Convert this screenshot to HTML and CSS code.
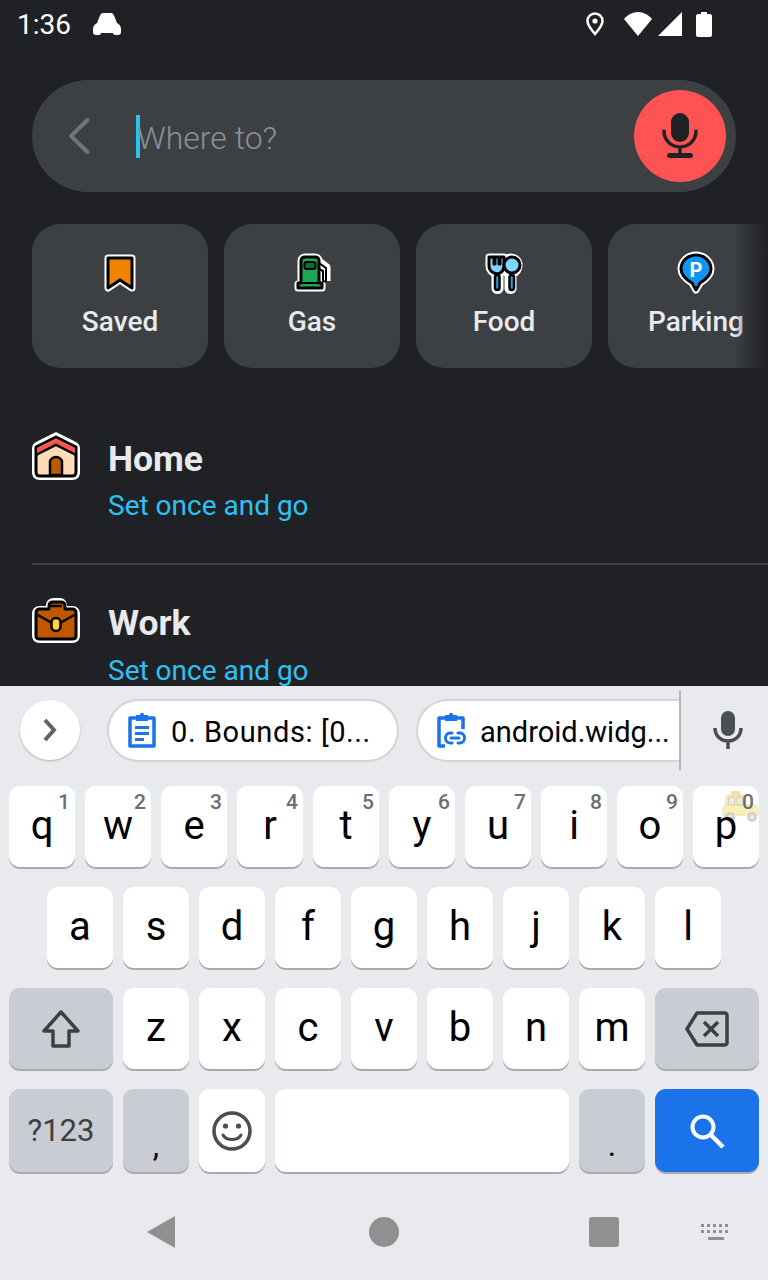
FILE: index.html
```html
<!DOCTYPE html>
<html lang="en">
<head>
    <meta charset="UTF-8">
    <meta name="viewport" content="width=device-width, initial-scale=1.0">
    <title>Where to?</title>
    <link rel="stylesheet" href="styles.css">
</head>
<body>
    <div class="app">
        <!-- status bar -->
        <div class="status">
            <span class="time">1:36</span>
            <svg class="notif" width="28" height="22" viewBox="0 0 28 22"><path fill="#fff" d="M10 0h8c2 0 3 2 4 5l2 5c2 1 4 3 4 6v3c0 2-1 3-3 3h-3c-1 0-2-1-2-2H8c0 1-1 2-2 2H3c-2 0-3-1-3-3v-3c0-3 2-5 4-6l2-5c1-3 2-5 4-5z"/></svg>
            <span class="spacer"></span>
            <svg class="pin" width="18" height="24" viewBox="0 0 18 24"><path fill="none" stroke="#fff" stroke-width="2.500" d="M9 1.500c-4.200 0-7.500 3.300-7.500 7.500 0 4.500 4.500 9.500 7.500 13 3-3.500 7.500-8.500 7.500-13 0-4.200-3.300-7.500-7.500-7.500z"/><circle cx="9" cy="9" r="2.600" fill="#fff"/></svg>
            <svg class="wifi" width="28" height="24" viewBox="0 0 28 24"><path fill="#fff" d="M14 24L0 7c3.500-4 8.500-7 14-7s10.500 3 14 7z"/></svg>
            <svg class="cell" width="24" height="24" viewBox="0 0 24 24"><path fill="#fff" d="M24 0v24H0z"/></svg>
            <svg class="batt" width="16" height="25" viewBox="0 0 16 25"><path fill="#fff" d="M5 0h6v2h3c1 0 2 1 2 2v19c0 1-1 2-2 2H2c-1 0-2-1-2-2V4c0-1 1-2 2-2h3z"/></svg>
        </div>

        <!-- search bar -->
        <div class="search">
            <svg class="back" width="22" height="36" viewBox="0 0 22 36"><path fill="none" stroke="#6f7478" stroke-width="4" stroke-linecap="round" stroke-linejoin="round" d="M19.500 2L3 18l16.500 16"/></svg>
            <span class="caret"></span>
            <span class="placeholder">Where to?</span>
            <div class="mic-btn">
                <svg width="36" height="46" viewBox="0 0 36 46"><rect x="9" y="0" width="18" height="29" rx="9" fill="#202125"/><path fill="none" stroke="#202125" stroke-width="3.500" stroke-linecap="round" d="M2 18c0 9 7 16 16 16s16-7 16-16M18 34v8"/><rect x="5" y="40" width="26" height="5" rx="2.500" fill="#202125"/></svg>
            </div>
        </div>

        <!-- category chips -->
        <div class="chips">
            <div class="chip">
                <svg class="chip-icon" width="40" height="44" viewBox="0 0 40 44">
                    <path class="halo" d="M8 8h24v30l-12-8-12 8z"/>
                    <path class="ink" fill="#f08300" d="M8 8h24v30l-12-8-12 8z"/>
                </svg>
                <span>Saved</span>
            </div>
            <div class="chip">
                <svg class="chip-icon" width="40" height="44" viewBox="0 0 40 44">
                    <path class="halo" d="M26 10l9 7v14M9 34V11c0-3 2-4 4-4h10c2 0 4 1 4 4v23h3v4H6v-4z"/>
                    <path fill="#fff" stroke="#000" stroke-width="2" stroke-linejoin="round" d="M27 13l7 5v12c0 2-3 2-3 0v-9l-4-2z"/>
                    <path class="ink" fill="#1fa655" d="M9 33V11c0-3 2-4 4-4h10c2 0 4 1 4 4v22h3v5H6v-5z"/>
                    <rect x="12.500" y="12" width="11" height="7" rx="2" fill="#0d6b35" stroke="#000" stroke-width="2"/>
                    <path stroke="#000" stroke-width="2" d="M7 33h23"/>
                </svg>
                <span>Gas</span>
            </div>
            <div class="chip">
                <svg class="chip-icon" width="40" height="44" viewBox="0 0 40 44">
                    <path class="halo" d="M5 7v9c0 4 3 7 6 8v15c0 2 5 2 5 0V24c1-1 3-2 4-3 1 1 2 2 4 3v15c0 2 5 2 5 0V24c4-1 6-5 6-9 0-5-4-8-8-8s-6 2-7 4V7z"/>
                    <path class="ink" fill="#7fd6ff" d="M5 7v9c0 4 3 7 8 8 5-1 7-4 7-8V7h-4v7h-1V7h-4v7h-1V7z"/>
                    <circle cx="28" cy="15" r="8" fill="#7fd6ff" stroke="#000" stroke-width="3"/>
                    <rect x="11" y="25" width="4.500" height="15" rx="2.200" fill="#29a3e8" stroke="#000" stroke-width="2.500"/>
                    <rect x="25.500" y="25" width="4.500" height="15" rx="2.200" fill="#29a3e8" stroke="#000" stroke-width="2.500"/>
                </svg>
                <span>Food</span>
            </div>
            <div class="chip">
                <svg class="chip-icon" width="40" height="44" viewBox="0 0 40 44">
                    <path class="halo" d="M20 5C11 5 5 12 5 19c0 7 6 11 11 14l4 7 4-7c5-3 11-7 11-14 0-7-6-14-15-14z"/>
                    <path class="ink" fill="#1195f3" d="M20 5C11 5 5 12 5 19c0 7 6 11 11 14l4 7 4-7c5-3 11-7 11-14 0-7-6-14-15-14z"/>
                    <text class="pin-letter" x="20" y="27" text-anchor="middle">P</text>
                </svg>
                <span>Parking</span>
            </div>
            <div class="chips-fade"></div>
        </div>

        <!-- saved places -->
        <div class="places">
            <div class="place place-first">
                <svg class="place-icon" width="48" height="48" viewBox="0 0 48 48">
                    <path fill="#fff" d="M24 0L44 10c2 1 4 3 4 6v24c0 5-3 8-8 8H8c-5 0-8-3-8-8V16c0-3 2-5 4-6z"/>
                    <path fill="#ffdcb8" stroke="#000" stroke-width="3" stroke-linejoin="round" d="M24 5L44 15v25c0 3-2 4-4 4H8c-2 0-4-1-4-4V15z"/>
                    <path fill="#ff5252" stroke="#000" stroke-width="0" d="M24 6.500L42.500 16v6L24 13 5.500 22v-6z"/>
                    <path fill="none" stroke="#000" stroke-width="2.500" d="M4 23l20-10 20 10"/>
                    <path fill="#b85c00" stroke="#000" stroke-width="2.500" d="M18 43V30c0-3 3-5 6-5s6 2 6 5v13z"/>
                </svg>
                <div class="place-text">
                    <div class="place-name">Home</div>
                    <div class="place-sub">Set once and go</div>
                </div>
            </div>
            <div class="place">
                <svg class="place-icon" width="48" height="45" viewBox="0 0 48 45">
                    <path fill="#fff" d="M14 8c0-5 3-8 8-8h6c4 0 7 3 7 8h5c5 0 8 3 8 8v21c0 5-3 8-8 8H8c-5 0-8-3-8-8V16c0-5 3-8 8-8z"/>
                    <path fill="#bf5600" stroke="#000" stroke-width="3" stroke-linejoin="round" d="M17 11V8c0-3 2-4 4-4h8c2 0 4 1 4 4v3h7c3 0 4 2 4 4v23c0 2-1 3-4 3H8c-3 0-4-1-4-3V15c0-2 1-4 4-4z"/>
                    <path fill="none" stroke="#000" stroke-width="2.500" d="M4 16l16 9M44 16l-16 9M18 8h12"/>
                    <rect x="19.500" y="20" width="9" height="13" rx="4.500" fill="#fdd835" stroke="#000" stroke-width="2.500"/>
                </svg>
                <div class="place-text">
                    <div class="place-name">Work</div>
                    <div class="place-sub">Set once and go</div>
                </div>
            </div>
        </div>
    </div>

    <div class="keyboard">
        <!-- suggestion strip -->
        <div class="strip">
            <div class="strip-arrow">
                <svg width="14" height="24" viewBox="0 0 14 24"><path fill="none" stroke="#5f6368" stroke-width="4" d="M2 2l9 10-9 10"/></svg>
            </div>
            <div class="clip clip-one">
                <svg width="30" height="36" viewBox="0 0 30 36"><path fill="none" stroke="#1a73e8" stroke-width="3.500" stroke-linejoin="round" d="M3 6h24v28H3z"/><path fill="#1a73e8" d="M9 3h4c0-3 4-3 4 0h4v6H9zM8 14h14v3H8zM8 20h14v3H8zM8 26h9v3H8z"/></svg>
                <span>0. Bounds: [0...</span>
            </div>
            <div class="clip clip-two">
                <svg width="32" height="36" viewBox="0 0 32 36"><path fill="none" stroke="#1a73e8" stroke-width="3.500" stroke-linejoin="round" d="M9 34H3V6h24v11"/><path fill="#1a73e8" d="M9 3h4c0-3 4-3 4 0h4v6H9z"/><path fill="none" stroke="#1a73e8" stroke-width="3" stroke-linecap="round" d="M16 21h-2c-6 0-6 10 0 10h2M22 21h2c6 0 6 10 0 10h-2M15 26h8"/></svg>
                <span>android.widg...</span>
            </div>
            <div class="strip-mic">
                <svg width="30" height="38" viewBox="0 0 30 38"><rect x="8" y="0" width="14" height="25" rx="7" fill="#4a4d52"/><path fill="none" stroke="#4a4d52" stroke-width="3.500" d="M2 17c0 8 6 13 13 13s13-5 13-13M15 30v8"/></svg>
            </div>
        </div>

        <div class="row">
            <div class="key">q<i>1</i></div>
            <div class="key">w<i>2</i></div>
            <div class="key">e<i>3</i></div>
            <div class="key">r<i>4</i></div>
            <div class="key">t<i>5</i></div>
            <div class="key">y<i>6</i></div>
            <div class="key">u<i>7</i></div>
            <div class="key">i<i>8</i></div>
            <div class="key">o<i>9</i></div>
            <div class="key">p<i>0</i>
                <svg class="taxi" width="38" height="34" viewBox="0 0 38 34">
                    <path fill="#fbf0b4" stroke="#e6deb4" stroke-width="1" d="M6 5h17l2 10h9c2 0 3 2 3 4v6H2v-6c0-1 1-2 2-2z"/>
                    <path fill="#efe3a4" d="M10 1h9v4h-9z"/>
                    <path fill="#e6ebe4" stroke="#d3cdae" d="M8 7h6v8H7zM16 7h5l2 8h-7z"/>
                    <circle cx="9" cy="27" r="5" fill="#d2d2cb"/>
                    <circle cx="31" cy="27" r="5" fill="#d2d2cb"/>
                    <circle cx="9" cy="27" r="2" fill="#f1f1ec"/>
                    <circle cx="31" cy="27" r="2" fill="#f1f1ec"/>
                </svg>
            </div>
        </div>
        <div class="row row-home">
            <div class="key">a</div>
            <div class="key">s</div>
            <div class="key">d</div>
            <div class="key">f</div>
            <div class="key">g</div>
            <div class="key">h</div>
            <div class="key">j</div>
            <div class="key">k</div>
            <div class="key">l</div>
        </div>
        <div class="row">
            <div class="key key-wide key-fn">
                <svg width="38" height="38" viewBox="0 0 38 38"><path fill="none" stroke="#3c4043" stroke-width="3.500" stroke-linejoin="round" d="M19 2L2 21h9v15h16V21h9z"/></svg>
            </div>
            <div class="key">z</div>
            <div class="key">x</div>
            <div class="key">c</div>
            <div class="key">v</div>
            <div class="key">b</div>
            <div class="key">n</div>
            <div class="key">m</div>
            <div class="key key-wide key-fn">
                <svg width="44" height="36" viewBox="0 0 44 36"><path fill="none" stroke="#3c4043" stroke-width="3.500" stroke-linejoin="round" d="M12 2h28c1 0 2 1 2 2v28c0 1-1 2-2 2H12L2 18z"/><path fill="none" stroke="#3c4043" stroke-width="3.500" d="M19 11l14 14M33 11L19 25"/></svg>
            </div>
        </div>
        <div class="row row-bottom">
            <div class="key key-wide key-fn key-sym">?123</div>
            <div class="key key-fn key-punct">,</div>
            <div class="key">
                <svg width="40" height="40" viewBox="0 0 40 40"><circle cx="20" cy="20" r="18" fill="none" stroke="#4a4d52" stroke-width="3.500"/><circle cx="13.500" cy="15" r="2.600" fill="#4a4d52"/><circle cx="26.500" cy="15" r="2.600" fill="#4a4d52"/><path fill="none" stroke="#4a4d52" stroke-width="3" stroke-linecap="round" d="M11 24c3 6 15 6 18 0"/></svg>
            </div>
            <div class="key key-space"></div>
            <div class="key key-fn key-punct">.</div>
            <div class="key key-wide key-go">
                <svg width="36" height="36" viewBox="0 0 36 36"><circle cx="14" cy="14" r="10.500" fill="none" stroke="#fff" stroke-width="4"/><path stroke="#fff" stroke-width="4.500" d="M21 21l13 13"/></svg>
            </div>
        </div>

        <!-- nav bar -->
        <div class="nav">
            <svg class="nav-back" width="28" height="32" viewBox="0 0 28 32"><path fill="#8e9092" d="M28 0v32L0 16z"/></svg>
            <span class="nav-home"></span>
            <span class="nav-recent"></span>
            <svg class="nav-kbd" width="32" height="18" viewBox="0 0 32 18"><path fill="#8e9092" d="M1 0h3v3H1zM7 0h3v3H7zM13 0h3v3h-3zM19 0h3v3h-3zM25 0h3v3h-3zM1 6h3v3H1zM7 6h3v3H7zM13 6h3v3h-3zM19 6h3v3h-3zM25 6h3v3h-3zM8 13h16v3H8z"/></svg>
        </div>
    </div>
</body>
</html>
```

FILE: styles.css
```css
html, body {
    margin: 0;
    height: 1280px;
    overflow: hidden;
}

body {
    font-family: Roboto, sans-serif;
    background: #202125;
}

/* top part of the screen */
.app {
    height: 686px;
    overflow: hidden;
    background: #202125;
}

.status {
    display: flex;
    align-items: center;
    height: 48px;
    padding: 0 56px 0 17px;
    color: #fff;
}

.time {
    font-size: 28px;
    width: 76px;
}

.spacer {
    flex: 1;
}

.pin {
    margin-right: 20px;
}

.wifi {
    margin-right: 6px;
}

.batt {
    margin-left: 14px;
}

.search {
    display: flex;
    align-items: center;
    height: 112px;
    margin: 32px 32px 0;
    padding: 0 10px 0 36px;
    border-radius: 56px;
    background: #3c4043;
}

.back {
    margin-right: 46px;
}

.caret {
    width: 4px;
    height: 43px;
    background: #2cc2f5;
}

.placeholder {
    flex: 1;
    margin-left: -3px;
    padding-top: 3px;
    font-size: 32px;
    font-weight: 300;
    color: #8b9094;
}

.mic-btn {
    display: flex;
    align-items: center;
    justify-content: center;
    width: 92px;
    height: 92px;
    border-radius: 50%;
    background: #ff5252;
}

.chips {
    position: relative;
    display: flex;
    gap: 16px;
    margin-top: 32px;
    padding-left: 32px;
    overflow: hidden;
}

.chip {
    flex: none;
    width: 176px;
    height: 144px;
    border-radius: 28px;
    background: #3c4043;
    display: flex;
    flex-direction: column;
    align-items: center;
    padding-top: 26px;
    box-sizing: border-box;
    font-size: 28px;
    font-weight: 500;
    color: #e8eaed;
}

.chip span {
    margin-top: 10px;
    line-height: 36px;
}

.chip-icon {
    display: block;
}

.chips-fade {
    position: absolute;
    top: 0;
    right: 0;
    width: 34px;
    height: 144px;
    background: linear-gradient(to right, rgba(32, 33, 37, 0), #202125);
}

.halo {
    fill: #fff;
    stroke: #fff;
    stroke-width: 7;
    stroke-linejoin: round;
}

.ink {
    stroke: #000;
    stroke-width: 3;
    stroke-linejoin: round;
}

.pin-letter {
    font-family: Roboto, sans-serif;
    font-size: 20px;
    font-weight: 700;
    fill: #fff;
}

.places {
    margin-left: 32px;
}

.place {
    display: flex;
    gap: 28px;
    height: 165px;
    padding-top: 33px;
    box-sizing: border-box;
}

.place-first {
    height: 197px;
    padding-top: 64px;
    border-bottom: 2px solid #3c4043;
}

.place-name {
    font-size: 35.5px;
    font-weight: 700;
    line-height: 44px;
    color: #e8eaed;
    margin-top: 5px;
}

.place + .place .place-name {
    margin-top: 3px;
}

.place-sub {
    font-size: 28px;
    line-height: 38px;
    margin-top: 6px;
    color: #2cc2f5;
}

.place + .place .place-sub {
    margin-top: 7px;
}

/* keyboard */
.keyboard {
    height: 594px;
    background: #e8eaed;
}

.strip {
    position: relative;
    display: flex;
    align-items: center;
    height: 100px;
    padding: 0 0 12px 20px;
    box-sizing: border-box;
}

.strip-arrow {
    display: flex;
    align-items: center;
    justify-content: center;
    width: 60px;
    height: 60px;
    margin-right: 27px;
    border-radius: 50%;
    background: #fff;
    box-shadow: 0 1px 2px rgba(0, 0, 0, 0.25);
}

.clip {
    display: flex;
    align-items: center;
    gap: 14px;
    box-sizing: border-box;
    height: 63px;
    border: 2px solid #d3d4d6;
    background: #fff;
    font-size: 29px;
    color: #000;
    white-space: nowrap;
}

.clip span {
    padding-top: 4px;
}

.clip-one {
    width: 292px;
    margin-right: 17px;
    padding-left: 18px;
    border-radius: 32px;
    letter-spacing: 0.6px;
}

.clip-two {
    width: 264px;
    padding-left: 18px;
    border-radius: 32px 0 0 32px;
    border-right: 0;
    gap: 12px;
}

.strip-mic {
    display: flex;
    justify-content: center;
    flex: 1;
    padding-left: 8px;
}

.clip-two::after {
    content: "";
    position: absolute;
    top: 4px;
    left: 679px;
    width: 2px;
    height: 80px;
    background: #b5b7ba;
}

.row {
    display: flex;
    gap: 10px;
    padding: 0 9px;
    margin-bottom: 20px;
}

.row-home {
    padding-left: 47px;
}

.key {
    position: relative;
    isolation: isolate;
    display: flex;
    align-items: center;
    justify-content: center;
    flex: none;
    width: 66px;
    height: 81px;
    padding-bottom: 3px;
    box-sizing: border-box;
    border-radius: 11px;
    background: #fff;
    box-shadow: 0 2px 0 #a9abae;
    font-size: 40px;
    color: #000;
}

.key i {
    position: absolute;
    top: 4px;
    right: 5px;
    font-style: normal;
    font-size: 21px;
    font-weight: 500;
    line-height: 24px;
    color: #6b6e72;
}

.key-wide {
    width: 104px;
    padding-bottom: 0;
}

.key-fn {
    background: #c9ccd3;
}

.key-sym {
    font-size: 31px;
    color: #3c4043;
}

.key-punct {
    font-size: 32px;
    padding-top: 28px;
}

.row-bottom .key {
    height: 83px;
    padding-bottom: 0;
}

.key-space {
    width: 294px;
}

.key-go {
    background: #1a73e8;
}

.taxi {
    position: absolute;
    top: 4px;
    right: 0;
    z-index: -1;
}

.nav {
    position: relative;
    height: 108px;
    margin-top: -20px;
}

.nav-back {
    position: absolute;
    left: 147px;
    top: 44px;
}

.nav-home {
    position: absolute;
    left: 369px;
    top: 45px;
    width: 30px;
    height: 30px;
    border-radius: 50%;
    background: #8e9092;
}

.nav-recent {
    position: absolute;
    left: 589px;
    top: 45px;
    width: 30px;
    height: 30px;
    border-radius: 3px;
    background: #8e9092;
}

.nav-kbd {
    position: absolute;
    left: 700px;
    top: 52px;
}
```
